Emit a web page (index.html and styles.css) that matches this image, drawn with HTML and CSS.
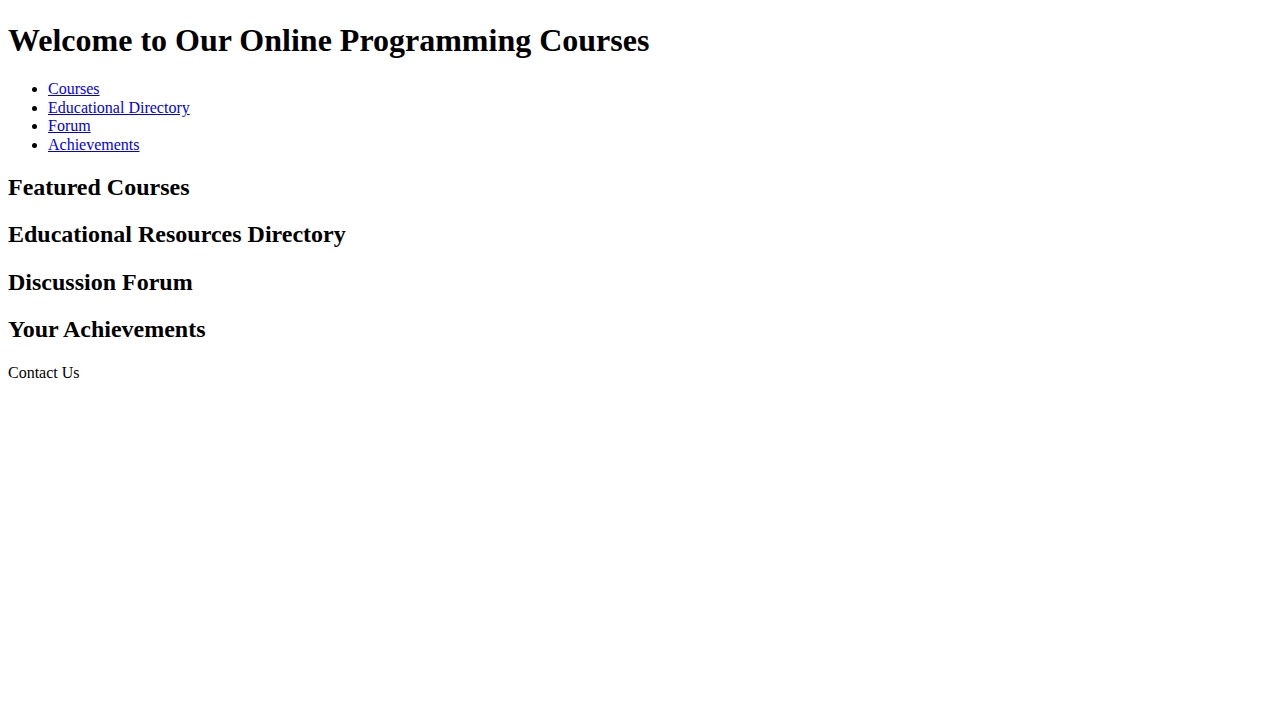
FILE: index.html
```html
<!DOCTYPE html>
<html lang="en" class="root">
<head>
<meta charset="utf-8">
<title>Online Programming Courses</title>
<link rel="stylesheet" href="styles.css">
</head>
<body class="page">
<header class="site-header">
  <h1 class="site-title">Welcome to Our Online Programming Courses</h1>
  <nav class="site-nav">
    <ul class="nav-list">
      <li><a href="#courses">Courses</a></li>
      <li><a href="#directory">Educational Directory</a></li>
      <li><a href="#forum">Forum</a></li>
      <li><a href="#achievements">Achievements</a></li>
    </ul>
  </nav>
</header>
<main>
  <section id="courses" class="section"><h2 class="section-title">Featured Courses</h2></section>
  <section id="directory" class="section"><h2 class="section-title">Educational Resources Directory</h2></section>
  <section id="forum" class="section"><h2 class="section-title">Discussion Forum</h2></section>
  <section id="achievements" class="section"><h2 class="section-title">Your Achievements</h2></section>
</main>
<footer class="site-footer">
  <p class="footer-text">Contact Us</p>
</footer>
</body>
</html>
```

FILE: styles.css
```css
.root {
  line-height: 1.15;
}
.page {
  margin: 0;
  padding: 0 8px 8px;
  font-family: "Liberation Serif", "Times New Roman", serif;
  font-size: 16px;
  color: #000;
  background: #fff;
}
.site-title {
  font-size: 2em;
  font-weight: bold;
  margin: 22.2px 0 21.44px;
}
.nav-list {
  margin: 16px 0;
  padding-left: 40px;
  list-style: disc;
}
.nav-list a {
  color: #0000ee;
  text-decoration: underline;
}
.section-title {
  font-size: 1.5em;
  font-weight: bold;
  margin: 0.83em 0;
}
.footer-text {
  margin: 1em 0;
}
```
